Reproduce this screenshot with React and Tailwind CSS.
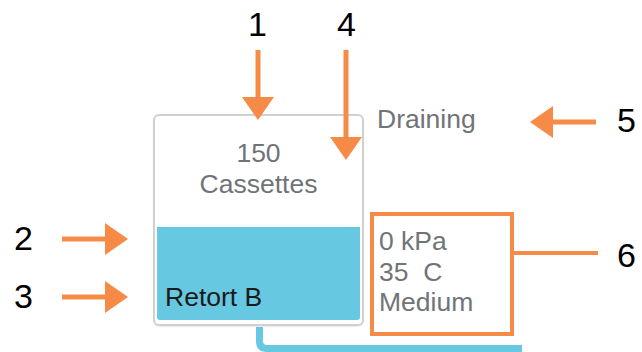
import React from "react";

const ORANGE = "#f68b47";
const BLUE = "#66c9e1";

// annotation arrows, callout line and the blue drain pipe
const Callouts = () => (
  <svg className="absolute inset-0" width="642" height="352" viewBox="0 0 642 352">
    {/* 1 */}
    <rect x="255.5" y="50" width="5" height="48" fill={ORANGE} />
    <polygon points="242,97 274,97 258,120" fill={ORANGE} />
    {/* 4 */}
    <rect x="343.5" y="50" width="5" height="88" fill={ORANGE} />
    <polygon points="330,137 362,137 346,160" fill={ORANGE} />
    {/* 5 */}
    <rect x="552" y="119.5" width="44" height="5" fill={ORANGE} />
    <polygon points="553,106 553,138 530,122" fill={ORANGE} />
    {/* 2 */}
    <rect x="62" y="236.5" width="44" height="5" fill={ORANGE} />
    <polygon points="105,223 105,255 128,239" fill={ORANGE} />
    {/* 3 */}
    <rect x="62" y="294.5" width="44" height="5" fill={ORANGE} />
    <polygon points="105,281 105,313 128,297" fill={ORANGE} />
    {/* 6 */}
    <rect x="514" y="251" width="84" height="4" fill={ORANGE} />
    {/* pipe */}
    <path d="M259.5 327 V341 Q259.5 348.5 267 348.5 H522" stroke={BLUE} strokeWidth="7" fill="none" />
  </svg>
);

const Num = ({ n, className }) => (
  <div className={`absolute text-[34px] leading-none text-black ${className}`}>{n}</div>
);

export default function App() {
  return (
    <div className="relative w-[642px] h-[352px] overflow-hidden bg-white font-['Liberation_Sans',Arial,sans-serif]">
      <div className="flex pt-[114px] pl-[153px]">
        {/* retort */}
        <div className="w-[211px] h-[212px] border-2 border-[#d0d0d0] rounded-[6px] p-[2px] pb-[4px] flex flex-col shadow-[0_1px_1px_rgba(0,0,0,0.08)]">
          <div className="flex-1 pt-[20px] text-center text-[26.5px] leading-[31px] text-[#707478]">
            <div>150</div>
            <div>Cassettes</div>
          </div>
          <div className="h-[93px] bg-[#66c9e1] rounded-b-[3px] flex items-end pl-[8px] pb-[8px]">
            <span className="text-[26.5px] leading-[30px] text-[#1a1a1a]">Retort B</span>
          </div>
        </div>

        {/* status */}
        <div className="ml-[6px] flex flex-col -mt-[10px]">
          <div className="pl-[7px] text-[26.5px] leading-[30px] text-[#707478]">Draining</div>
          <div className="mt-[78px] w-[144px] h-[124px] border-4 border-[#f68b47] pl-[5px] pt-[10px] text-[26.5px] leading-[30.5px] text-[#707478]">
            <div>0 kPa</div>
            <div>35 &nbsp;C</div>
            <div>Medium</div>
          </div>
        </div>
      </div>

      <Callouts />

      <Num n="1" className="left-[248px] top-[7px]" />
      <Num n="4" className="left-[337px] top-[7px]" />
      <Num n="5" className="left-[617px] top-[103px]" />
      <Num n="2" className="left-[14px] top-[221px]" />
      <Num n="3" className="left-[14px] top-[279px]" />
      <Num n="6" className="left-[617px] top-[238px]" />
    </div>
  );
}
